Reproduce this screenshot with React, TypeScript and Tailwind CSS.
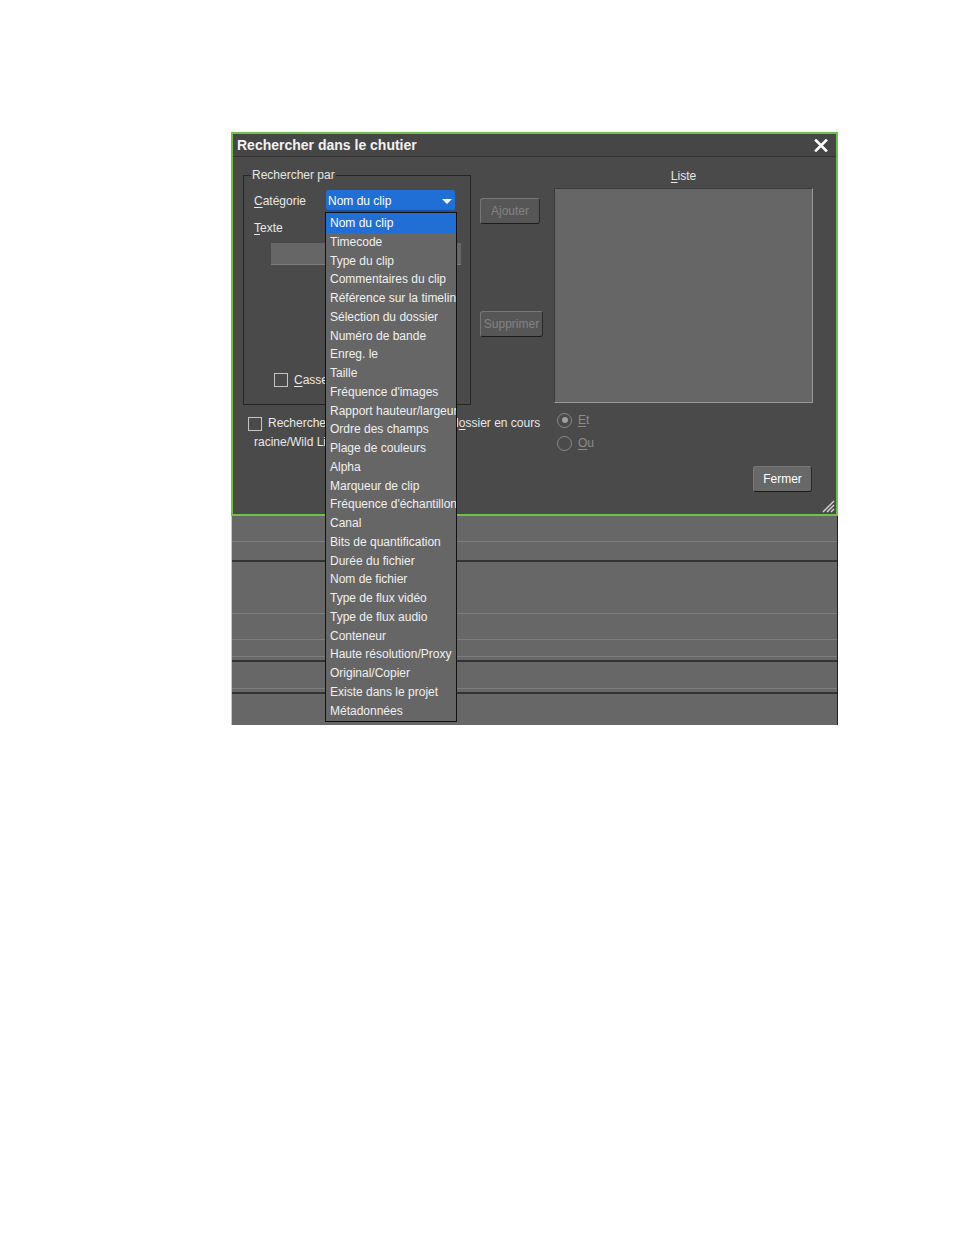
import React from 'react';

const items = [
  'Nom du clip',
  'Timecode',
  'Type du clip',
  'Commentaires du clip',
  'Référence sur la timeline',
  'Sélection du dossier',
  'Numéro de bande',
  'Enreg. le',
  'Taille',
  "Fréquence d'images",
  'Rapport hauteur/largeur',
  'Ordre des champs',
  'Plage de couleurs',
  'Alpha',
  'Marqueur de clip',
  "Fréquence d'échantillonnage",
  'Canal',
  'Bits de quantification',
  'Durée du fichier',
  'Nom de fichier',
  'Type de flux vidéo',
  'Type de flux audio',
  'Conteneur',
  'Haute résolution/Proxy',
  'Original/Copier',
  'Existe dans le projet',
  'Métadonnées',
];

function U({ children }: { children: React.ReactNode }) {
  return <span className="underline underline-offset-2">{children}</span>;
}

function Btn({ label, disabled, w }: { label: string; disabled?: boolean; w: string }) {
  return (
    <div
      className={`${w} h-[26px] rounded-[3px] border border-t-[#777] border-l-[#777] border-r-[#2a2a2a] border-b-[#1c1c1c] flex items-center justify-center text-[12px] ${
        disabled ? 'bg-[#565656] text-[#838383]' : 'bg-[#686868] text-white'
      }`}
    >
      {label}
    </div>
  );
}

function CheckBox() {
  return <div className="w-[14px] h-[14px] shrink-0 border border-[#c4c4c4] bg-[#4a4a4a]" />;
}

function Radio({ on, children }: { on?: boolean; children: React.ReactNode }) {
  return (
    <div className="h-[16px] flex items-center gap-[6px] ml-[3px] text-[#8c8c8c]">
      <div className="w-[15px] h-[15px] rounded-full border border-[#8a8a8a] flex items-center justify-center">
        {on && <div className="w-[6px] h-[6px] rounded-full bg-[#a0a0a0]" />}
      </div>
      <span>{children}</span>
    </div>
  );
}

export default function App() {
  return (
    <div className="min-h-[1235px] bg-white pt-[132px] pl-[231px] font-['Liberation_Sans',Arial,sans-serif] text-[12px] text-[#e8e8e8]">
      <div className="w-[607px]">
        {/* dialog */}
        <div className="relative w-[607px] h-[384px] border-2 border-[#6ec24a] bg-[#4a4a4a] flex flex-col">
          <div className="h-[23px] shrink-0 bg-[#464646] border-b border-[#333] flex items-center justify-between pl-[4px] pr-[8px]">
            <span className="text-[14px] font-bold text-[#f2f2f2]">Rechercher dans le chutier</span>
            <svg width="14" height="13" viewBox="0 0 14 13">
              <path d="M2 1.5 L12 11.5 M12 1.5 L2 11.5" stroke="#fff" strokeWidth="2.6" strokeLinecap="square" />
            </svg>
          </div>

          <div className="flex-1 flex items-start pt-[11px] pl-[10px]">
            {/* column A */}
            <div className="w-[228px] shrink-0">
              <fieldset className="h-[237px] border border-[#262626]">
                <legend className="ml-[7px] px-[1px] leading-[15px] text-[#e6e6e6]">Rechercher par</legend>
                <div className="flex flex-col pl-[10px]">
                  <div className="mt-[7px] flex items-center h-[21px]">
                    <span className="w-[72px]">
                      <U>C</U>atégorie
                    </span>
                    <div className="relative">
                      <div className="w-[129px] h-[21px] rounded-[3px] bg-[#1f6fd7] border-b border-[#17509c] flex items-center justify-between pl-[2px] pr-[3px] pt-[1px] text-white">
                        <span>Nom du clip</span>
                        <svg width="10" height="6" viewBox="0 0 10 6" className="mt-[3px]">
                          <path d="M0 0 H10 L5 5 Z" fill="#fff" />
                        </svg>
                      </div>
                      {/* open list */}
                      <div className="absolute z-20 left-[-1px] top-[22px] w-[132px] h-[510px] border border-[#111] bg-[#666] pt-[1px] overflow-hidden">
                        {items.map((it, i) => (
                          <div
                            key={it}
                            className={`h-[18.75px] leading-[18.75px] pl-[4px] whitespace-nowrap overflow-hidden text-[12px] ${
                              i === 0 ? 'bg-[#1f6fd7] text-white' : 'text-[#f0f0f0]'
                            }`}
                          >
                            {it}
                          </div>
                        ))}
                      </div>
                    </div>
                  </div>
                  <div className="mt-[10px] h-[14px] leading-[14px]">
                    <U>T</U>exte
                  </div>
                  <div className="mt-[8px] ml-[17px] w-[190px] h-[22px] bg-[#666] border-b border-[#7c7c7c]" />
                  <div className="mt-[106px] ml-[20px] flex items-center gap-[6px]">
                    <CheckBox />
                    <span>
                      <U>C</U>asse
                    </span>
                  </div>
                </div>
              </fieldset>
              <div className="mt-[9px] ml-[5px] w-[300px] leading-[19px]">
                <div className="flex items-center gap-[6px] whitespace-nowrap">
                  <CheckBox />
                  <span>
                    Rechercher également dans votre d<U>o</U>ssier en cours
                  </span>
                </div>
                <div className="pl-[6px] whitespace-nowrap">racine/Wild Links</div>
              </div>
            </div>

            {/* column B */}
            <div className="ml-[9px] w-[63px] shrink-0 flex flex-col">
              <div className="mt-[30px]">
                <Btn label="Ajouter" disabled w="w-[60px]" />
              </div>
              <div className="mt-[87px]">
                <Btn label="Supprimer" disabled w="w-[63px]" />
              </div>
            </div>

            {/* column C */}
            <div className="ml-[11px] w-[259px] shrink-0 flex flex-col">
              <div className="h-[16px] leading-[16px] text-center">
                <U>L</U>iste
              </div>
              <div className="mt-[4px] h-[215px] bg-[#666] border border-t-[#3c3c3c] border-l-[#3c3c3c] border-r-[#9a9a9a] border-b-[#9a9a9a]" />
              <div className="mt-[9px]">
                <Radio on>
                  <U>E</U>t
                </Radio>
              </div>
              <div className="mt-[7px]">
                <Radio>
                  <U>O</U>u
                </Radio>
              </div>
              <div className="mt-[15px] self-end mr-[1px]">
                <Btn label="Fermer" w="w-[59px]" />
              </div>
            </div>
          </div>

          <svg className="absolute right-[1px] bottom-[1px]" width="16" height="16" viewBox="0 0 16 16">
            <path d="M15 4 L4 15 M15 8 L8 15 M15 12 L12 15" stroke="#d8d8d8" strokeWidth="1.4" />
          </svg>
        </div>

        {/* area behind dialog */}
        <div className="h-[209px] bg-[#676767] border-l border-l-[#c8c8c8] border-r border-r-[#222] flex flex-col">
          <div className="h-[26px] shrink-0 border-b border-[#7d7d7d]" />
          <div className="h-[20px] shrink-0 border-b-2 border-[#333]" />
          <div className="h-[52px] shrink-0 border-b border-[#7d7d7d]" />
          <div className="h-[26px] shrink-0 border-b border-[#7d7d7d]" />
          <div className="h-[17px] shrink-0 border-b border-[#7d7d7d]" />
          <div className="h-[5px] shrink-0 border-b-2 border-[#333]" />
          <div className="h-[27px] shrink-0 border-b border-[#7d7d7d]" />
          <div className="h-[5px] shrink-0 border-b-2 border-[#333]" />
          <div className="flex-1" />
        </div>
      </div>
    </div>
  );
}
